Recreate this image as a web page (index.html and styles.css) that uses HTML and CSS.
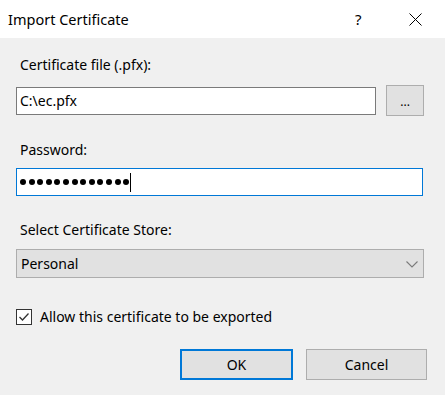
FILE: index.html
```html
<!DOCTYPE html>
<html lang="en">
<head>
    <meta charset="UTF-8">
    <meta name="viewport" content="width=device-width, initial-scale=1.0">
    <title>Import Certificate</title>
    <link rel="stylesheet" href="styles.css">
</head>
<body>
    <div class="dialog">
        <div class="titlebar">
            <span class="title">Import Certificate</span>
            <span class="help">?</span>
            <span class="close">
                <svg width="13" height="13" viewBox="0 0 13 13"><path d="M0.5 0.5 L12.5 12.5 M12.5 0.5 L0.5 12.5" stroke="#000" stroke-width="1" fill="none"/></svg>
            </span>
        </div>

        <div class="content">
            <div class="label label-file">Certificate file (.pfx):</div>
            <div class="file-row">
                <div class="textbox file-box">C:\ec.pfx</div>
                <div class="button browse">...</div>
            </div>

            <div class="label label-pass">Password:</div>
            <div class="textbox pass-box focused">
                <span class="dots" id="dots"></span>
                <span class="caret"></span>
            </div>

            <div class="label label-store">Select Certificate Store:</div>
            <div class="combo">
                <span>Personal</span>
                <svg width="12" height="7" viewBox="0 0 12 7"><path d="M0.5 0.5 L6 6 L11.5 0.5" stroke="#7a7a7a" stroke-width="1.1" fill="none"/></svg>
            </div>

            <div class="check-row">
                <span class="checkbox">
                    <svg width="14" height="14" viewBox="0 0 14 14"><path d="M2.5 7 L5.5 10 L11.5 3.5" stroke="#333" stroke-width="1.3" fill="none"/></svg>
                </span>
                <span>Allow this certificate to be exported</span>
            </div>

            <div class="actions">
                <div class="button ok">OK</div>
                <div class="button cancel">Cancel</div>
            </div>
        </div>
    </div>

    <script>
        // password bullets, one per character
        const dots = document.getElementById('dots');
        for (let i = 0; i < 13; i++) {
            const d = document.createElement('span');
            d.className = 'dot';
            dots.appendChild(d);
        }
    </script>
</body>
</html>
```

FILE: styles.css
```css
body { margin: 0; background: #f0f0f0; font-family: "Noto Sans", "Open Sans", sans-serif; font-size: 14px; color: #000; }
.dialog { width: 445px; height: 395px; background: #f0f0f0; }

.titlebar { height: 38px; background: #fff; display: flex; align-items: center; }
.title { padding-left: 8px; font-size: 14.5px; flex: 1; padding-bottom: 1px; }
.help { width: 10px; font-size: 15px; margin-right: 44px; }
.close { display: flex; margin-right: 23px; }

.content { padding: 17px 21px 0 16px; display: flex; flex-direction: column; }
.label { height: 20px; line-height: 20px; padding-left: 4px; }
.label-file { margin-bottom: 10px; }
.label-pass { margin-top: 24px; margin-bottom: 8px; }
.label-store { margin-top: 24px; margin-bottom: 9px; }

.textbox { background: #fff; border: 1px solid #7a7a7a; box-sizing: border-box; height: 28px; display: flex; align-items: center; padding-left: 3px; }
.focused { border-color: #0078d7; }

.file-row { display: flex; align-items: center; gap: 10px; }
.file-box { width: 361px; }
.pass-box { width: 407px; }

.dots { display: flex; gap: 2.6px; }
.dot { width: 6px; height: 6px; border-radius: 50%; background: #000; }
.caret { width: 1px; height: 19px; background: #000; margin-left: 1px; }

.button { background: #e1e1e1; border: 1px solid #adadad; box-sizing: border-box; display: flex; align-items: center; justify-content: center; }
.browse { width: 38px; height: 31px; font-size: 12px; padding-top: 2px; }

.combo { height: 29px; background: #e1e1e1; border: 1px solid #adadad; box-sizing: border-box; display: flex; align-items: center; justify-content: space-between; padding: 0 5px 0 4px; }
.combo svg { margin-top: 1px; }

.check-row { margin-top: 30px; display: flex; align-items: center; gap: 8px; height: 17px; }
.checkbox { width: 16px; height: 16px; box-sizing: border-box; border: 1px solid #333; background: #fff; display: flex; align-items: center; justify-content: center; }

.actions { margin-top: 24px; display: flex; justify-content: flex-end; gap: 13px; margin-right: -3px; }
.ok { width: 113px; height: 31px; border: 2px solid #0078d7; }
.cancel { width: 121px; height: 31px; }
```
